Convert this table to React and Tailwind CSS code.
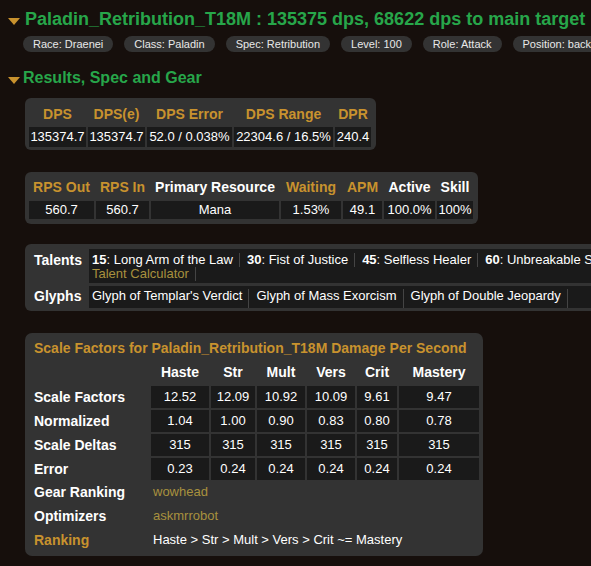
const pills = ["Race: Draenei", "Class: Paladin", "Spec: Retribution", "Level: 100", "Role: Attack", "Position: back"]

const dpsCols = [
  { h: "DPS", v: "135374.7" },
  { h: "DPS(e)", v: "135374.7" },
  { h: "DPS Error", v: "52.0 / 0.038%" },
  { h: "DPS Range", v: "22304.6 / 16.5%" },
  { h: "DPR", v: "240.4" },
]

const resCols = [
  { h: "RPS Out", v: "560.7", gold: true },
  { h: "RPS In", v: "560.7", gold: true },
  { h: "Primary Resource", v: "Mana" },
  { h: "Waiting", v: "1.53%", gold: true },
  { h: "APM", v: "49.1", gold: true },
  { h: "Active", v: "100.0%" },
  { h: "Skill", v: "100%" },
]

const talents = [
  ["15", "Long Arm of the Law"],
  ["30", "Fist of Justice"],
  ["45", "Selfless Healer"],
  ["60", "Unbreakable Spirit"],
  ["75", "Divine Purpose"],
  ["90", "Holy Prism"],
  ["100", "Final Verdict"],
]

const glyphs = ["Glyph of Templar's Verdict", "Glyph of Mass Exorcism", "Glyph of Double Jeopardy"]

const stats = ["Haste", "Str", "Mult", "Vers", "Crit", "Mastery"]
const scaleRows = [
  { label: "Scale Factors", vals: ["12.52", "12.09", "10.92", "10.09", "9.61", "9.47"] },
  { label: "Normalized", vals: ["1.04", "1.00", "0.90", "0.83", "0.80", "0.78"] },
  { label: "Scale Deltas", vals: ["315", "315", "315", "315", "315", "315"] },
  { label: "Error", vals: ["0.23", "0.24", "0.24", "0.24", "0.24", "0.24"] },
]

function Caret() {
  return (
    <span className="inline-block w-0 h-0 mt-[4px] border-l-[6px] border-r-[6px] border-t-[7px] border-l-transparent border-r-transparent border-t-[#c8922e]" />
  )
}

export default function App() {
  return (
    <div className="w-[591px] h-[566px] overflow-hidden bg-[#160f0c] text-white font-['Liberation_Sans',Arial,sans-serif]">
      {/* title */}
      <div className="flex items-center gap-[5px] pl-[8px] pt-[9px] whitespace-nowrap">
        <Caret />
        <h1 className="text-[18px] leading-[20px] font-bold text-[#27a64a]">
          Paladin_Retribution_T18M : 135375 dps, 68622 dps to main target
        </h1>
      </div>
      <div className="flex gap-[11px] pl-[23px] mt-[7px] whitespace-nowrap">
        {pills.map((p) => (
          <span key={p} className="shrink-0 rounded-full bg-[#333] px-[10px] h-[16px] leading-[16px] text-[11px] text-[#e8e8e8]">
            {p}
          </span>
        ))}
      </div>

      <div className="flex items-center gap-[3px] pl-[8px] mt-[17px]">
        <Caret />
        <h2 className="text-[16px] leading-[18px] font-bold text-[#27a64a]">Results, Spec and Gear</h2>
      </div>

      {/* dps */}
      <div className="ml-[25px] mt-[11px] w-fit rounded-[6px] bg-[#333] pt-[5px] pb-[3px] pl-[4px] pr-[5px]">
        <div className="grid grid-cols-[57px_57px_85px_99px_36px] gap-x-[2px] gap-y-[2px]">
          {dpsCols.map((c) => (
            <div key={c.h} className="h-[22px] flex items-center justify-center text-[14px] font-bold text-[#c8922e]">{c.h}</div>
          ))}
          {dpsCols.map((c) => (
            <div key={c.h + "v"} className="h-[20px] flex items-center justify-center bg-[#1a1a1a] text-[13px] whitespace-nowrap">{c.v}</div>
          ))}
        </div>
      </div>

      {/* resources */}
      <div className="ml-[25px] mt-[22px] w-fit rounded-[6px] bg-[#333] pt-[4px] pb-[5px] pl-[4px] pr-[5px]">
        <div className="grid grid-cols-[65px_53px_128px_60px_39px_51px_36px] gap-x-[2px] gap-y-[2px]">
          {resCols.map((c) => (
            <div key={c.h} className={`h-[23px] flex items-center justify-center text-[14px] font-bold whitespace-nowrap ${c.gold ? "text-[#c8922e]" : "text-white"}`}>{c.h}</div>
          ))}
          {resCols.map((c) => (
            <div key={c.h + "v"} className="h-[18px] flex items-center justify-center bg-[#1a1a1a] text-[13px] whitespace-nowrap">{c.v}</div>
          ))}
        </div>
      </div>

      {/* talents */}
      <div className="ml-[25px] mt-[20px] w-[700px] rounded-[6px] bg-[#333] pt-[5px] pb-[3px] pl-[9px]">
        <div className="flex gap-x-[2px]">
          <div className="w-[53px] shrink-0 pt-[4px] text-[14px] leading-[14px] font-bold">Talents</div>
          <div className="flex-1 h-[34px] bg-[#1a1a1a] pl-[3px] pt-[4px] text-[13px] leading-[14px] whitespace-nowrap">
            <div className="flex">
              {talents.map(([lvl, name]) => (
                <span key={lvl} className="pr-[6px] mr-[7px] border-r border-[#444]">
                  <b>{lvl}</b>: {name}
                </span>
              ))}
            </div>
            <div className="flex">
              <span className="pr-[6px] border-r border-[#444] text-[#a8913e]">Talent Calculator</span>
            </div>
          </div>
        </div>
        <div className="flex gap-x-[2px] mt-[3px]">
          <div className="w-[53px] shrink-0 pt-[3px] text-[14px] leading-[14px] font-bold">Glyphs</div>
          <div className="flex-1 h-[22px] bg-[#1a1a1a] pl-[3px] pt-[3px] text-[13px] leading-[14px] whitespace-nowrap flex">
            {glyphs.map((g) => (
              <span key={g} className="pr-[6px] mr-[7px] border-r border-[#444]">{g}</span>
            ))}
          </div>
        </div>
      </div>

      {/* scale factors */}
      <div className="ml-[25px] mt-[22px] w-[458px] rounded-[7px] bg-[#333] pt-[7px] pb-[5px] pl-[9px] pr-[4px]">
        <div className="text-[14px] leading-[16px] font-bold text-[#c8922e] whitespace-nowrap">
          Scale Factors for Paladin_Retribution_T18M Damage Per Second
        </div>
        <div className="mt-[4px] grid grid-cols-[115px_58px_44px_48px_48px_40px_80px] gap-x-[2px] gap-y-[2px]">
          <div className="h-[24px]" />
          {stats.map((s) => (
            <div key={s} className="h-[24px] flex items-center justify-center text-[14px] font-bold">{s}</div>
          ))}
          {scaleRows.map((r) => (
            <>
              <div key={r.label} className="h-[22px] flex items-center text-[14px] font-bold whitespace-nowrap">{r.label}</div>
              {r.vals.map((v, i) => (
                <div key={r.label + i} className="h-[22px] flex items-center justify-center bg-[#1a1a1a] text-[13px]">{v}</div>
              ))}
            </>
          ))}
        </div>
        <div className="mt-[1px] flex flex-col gap-y-[2px]">
          <div className="h-[22px] flex items-center">
            <span className="w-[117px] text-[14px] font-bold">Gear Ranking</span>
            <span className="pl-[2px] text-[13px] text-[#a8913e]">wowhead</span>
          </div>
          <div className="h-[22px] flex items-center">
            <span className="w-[117px] text-[14px] font-bold">Optimizers</span>
            <span className="pl-[2px] text-[13px] text-[#a8913e]">askmrrobot</span>
          </div>
          <div className="h-[22px] flex items-center">
            <span className="w-[117px] text-[14px] font-bold text-[#c8922e]">Ranking</span>
            <span className="pl-[2px] text-[13px]">Haste &gt; Str &gt; Mult &gt; Vers &gt; Crit ~= Mastery</span>
          </div>
        </div>
      </div>
    </div>
  )
}
